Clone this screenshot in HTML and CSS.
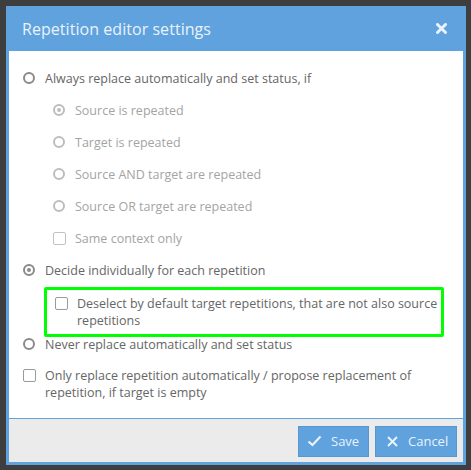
FILE: index.html
```html
<!DOCTYPE html>
<html>
<head>
<meta charset="utf-8">
<link rel="stylesheet" href="styles.css">
</head>
<body>
<div class="dialog">
  <div class="header">
    <span class="title">Repetition editor settings</span>
    <svg class="close" width="11" height="11" viewBox="0 0 11 11"><path d="M1.5 1.5 L9.5 9.5 M9.5 1.5 L1.5 9.5" stroke="#eaf2fb" stroke-width="3" stroke-linecap="round"/></svg>
  </div>
  <div class="body">
    <div class="row"><span class="radio"></span><span class="label">Always replace automatically and set status, if</span></div>
    <div class="row sub disabled"><span class="radio checked"></span><span class="label">Source is repeated</span></div>
    <div class="row sub disabled"><span class="radio"></span><span class="label">Target is repeated</span></div>
    <div class="row sub disabled"><span class="radio"></span><span class="label">Source AND target are repeated</span></div>
    <div class="row sub disabled"><span class="radio"></span><span class="label">Source OR target are repeated</span></div>
    <div class="row sub disabled"><span class="check"></span><span class="label">Same context only</span></div>
    <div class="row"><span class="radio checked"></span><span class="label">Decide individually for each repetition</span></div>
    <div class="highlight">
      <div class="line"><span class="check"></span><span class="label">Deselect by default target repetitions, that are not also source repetitions</span></div>
    </div>
    <div class="line never"><span class="radio"></span><span class="label">Never replace automatically and set status</span></div>
    <div class="line only"><span class="check"></span><span class="label">Only replace repetition automatically / propose replacement of repetition, if target is empty</span></div>
  </div>
  <div class="footer">
    <button class="btn save">
      <svg width="15" height="12" viewBox="0 0 15 12"><path d="M1.5 6.5 L5.5 10 L13.5 1.5" fill="none" stroke="#eaf2fb" stroke-width="2.2"/></svg>
      <span>Save</span>
    </button>
    <button class="btn cancel">
      <svg width="11" height="11" viewBox="0 0 11 11"><path d="M1 1 L10 10 M10 1 L1 10" stroke="#eaf2fb" stroke-width="2"/></svg>
      <span>Cancel</span>
    </button>
  </div>
</div>
</body>
</html>
```
FILE: styles.css
```css
html, body {
  margin: 0;
  padding: 0;
  background: #3e3e3e;
  width: 471px;
  height: 470px;
  overflow: hidden;
  font-family: "Open Sans", "Noto Sans", sans-serif;
}
.dialog {
  margin: 6px 0 0 6px;
  width: 460px;
  box-sizing: border-box;
  border: 3px solid #5fa2dd;
  border-top: 0;
  background: #ebebeb;
}
.header {
  height: 45px;
  margin: 0 -3px;
  background: #5fa2dd;
  display: flex;
  align-items: center;
  justify-content: space-between;
  padding: 0 19px 0 16px;
}
.title {
  color: #eaf2fb;
  font-size: 16px;
  letter-spacing: 0.05px;
}
.close { display: block; margin-top: -1px; }
.body {
  background: #fff;
  height: 368px;
  box-sizing: border-box;
  padding: 11px 0 0 14px;
  border-bottom: 1px solid #5fa2dd;
  color: #666;
  font-size: 12.5px;
}
.row {
  height: 32px;
  display: flex;
  align-items: center;
}
.sub { padding-left: 30px; }
.disabled { color: #a4a4a4; }
.radio {
  width: 12px;
  height: 12px;
  box-sizing: border-box;
  border: 2px solid #8a8a8a;
  border-radius: 50%;
  flex: none;
  margin-right: 10px;
  position: relative;
}
.disabled .radio { border-color: #bdbdbd; }
.radio.checked::after {
  content: "";
  position: absolute;
  left: 2px; top: 2px;
  width: 4px; height: 4px;
  border-radius: 50%;
  background: #8a8a8a;
}
.disabled .radio.checked::after { background: #bdbdbd; }
.check {
  width: 13px;
  height: 13px;
  box-sizing: border-box;
  border: 1px solid #9a9a9a;
  border-radius: 2px;
  flex: none;
  margin-right: 9px;
}
.disabled .check { border-color: #c2c2c2; }
.label { line-height: 17px; }
.line {
  display: flex;
  align-items: flex-start;
  line-height: 17px;
}
.line .radio, .line .check { margin-top: 2px; }
.highlight {
  margin: 1px 0 0 21px;
  width: 400px;
  box-sizing: border-box;
  border: 3px solid #0f0;
  border-radius: 2px;
  padding: 5px 2px 5px 8px;
  height: 50px;
}
.never { margin-top: -1px; }
.only { margin-top: 14px; padding-right: 4px; }
.footer {
  height: 43px;
  display: flex;
  justify-content: flex-end;
  align-items: center;
  gap: 6px;
  padding-right: 6px;
}
.btn {
  height: 31px;
  background: #5fa2dd;
  border: 1px solid #5597d2;
  color: #eaf2fb;
  font-family: "Open Sans", "Noto Sans", sans-serif;
  font-size: 13px;
  display: flex;
  align-items: center;
  padding: 0;
  margin-top: 1px;
}
.btn svg { display: block; }
.save { width: 71px; padding-left: 8px; }
.save span { margin-left: 9px; }
.cancel { width: 82px; padding-left: 11px; }
.cancel span { margin-left: 10px; }
```
